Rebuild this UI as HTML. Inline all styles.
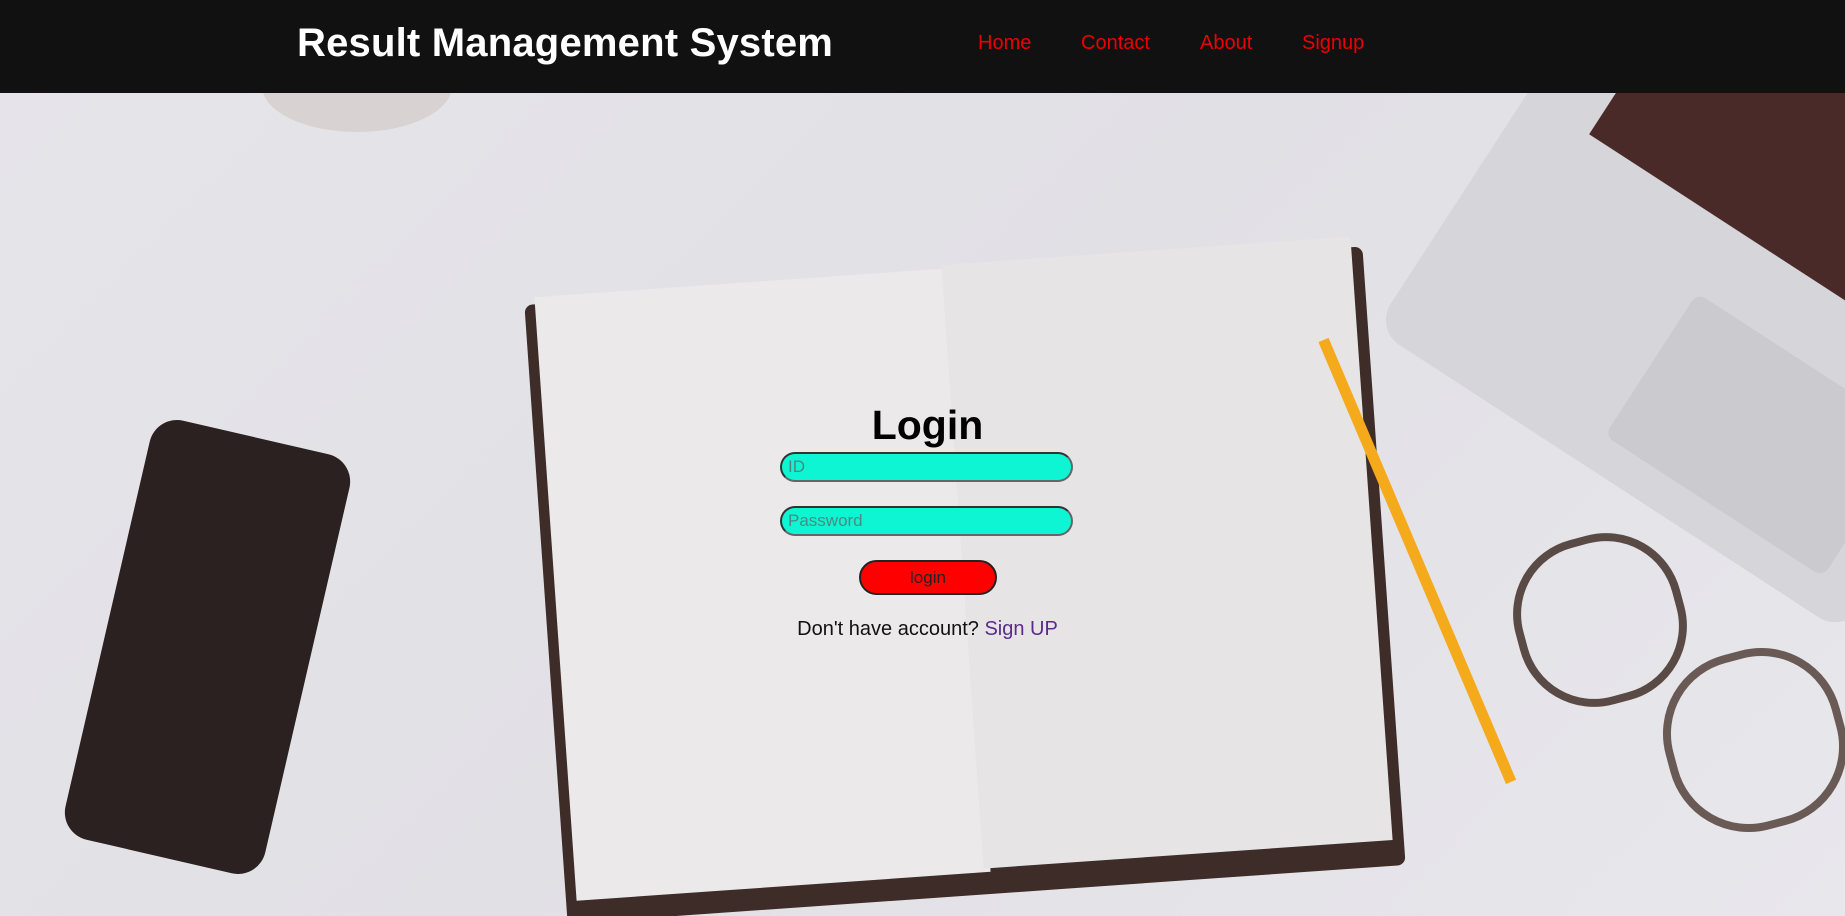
<!DOCTYPE html>
<html><head><meta charset="utf-8"><style>
*{margin:0;padding:0;box-sizing:border-box}
html,body{width:1845px;height:916px;overflow:hidden}
body{position:relative;font-family:"Liberation Sans",Arial,sans-serif;background:linear-gradient(135deg,#e6e5ea 0%,#e1e0e5 50%,#e8e7ec 100%)}
.abs{position:absolute}
header{position:absolute;left:0;top:0;width:1845px;height:93px;background:#111;z-index:5}
header h1{position:absolute;left:297px;top:21px;color:#fff;font-size:40px;font-weight:bold;letter-spacing:0.2px}
header a{position:absolute;top:32px;color:#e00;font-size:20px;text-decoration:none}
.form{position:absolute;left:0;top:0;width:1845px;z-index:4}
h2{position:absolute;left:0;width:1855px;text-align:center;top:402px;font-size:41px;font-weight:bold;color:#000}
.inp{position:absolute;left:780px;width:293px;height:30px;border-radius:15px;background:#0ef5d4;border:2px solid #333;border-right-color:#666;border-bottom-color:#666;color:#4a8a80;font-size:17px;padding-left:6px;line-height:26px}
.btn{position:absolute;left:859px;top:560px;width:138px;height:35px;border-radius:18px;background:#f00;border:2px solid #222;text-align:center;font-size:17px;line-height:31px;color:#222}
.txt{position:absolute;left:0;width:1855px;text-align:center;top:618px;font-size:20px;color:#111}
.txt span{color:#5a2b8a}
</style></head><body>
<header><h1>Result Management System</h1>
<a style="left:978px">Home</a><a style="left:1081px">Contact</a><a style="left:1200px">About</a><a style="left:1302px">Signup</a></header>

<div class="abs" style="left:262px;top:40px;width:190px;height:92px;border-radius:50%;background:#d8d2d2"></div>
<div class="abs" style="left:105px;top:432px;width:205px;height:430px;border-radius:28px;background:#2b2121;transform:rotate(13deg)"></div>
<div class="abs" style="left:545px;top:275px;width:840px;height:620px;background:#3d2c28;border-radius:8px;transform:rotate(-4deg)"></div>
<div class="abs" style="left:555px;top:282px;width:415px;height:605px;background:#ebe9ea;transform:rotate(-4deg)"></div>
<div class="abs" style="left:962px;top:250px;width:410px;height:605px;background:#e6e4e5;transform:rotate(-4deg)"></div>
<div class="abs" style="top:340px;width:11px;height:480px;background:#f4aa1a;transform:rotate(-23deg);transform-origin:50% 0;left:1318px"></div>
<div class="abs" style="left:1460px;top:40px;width:560px;height:480px;border-radius:30px;background:#d6d5d9;transform:rotate(33deg)"></div>
<div class="abs" style="left:1620px;top:30px;width:360px;height:220px;background:#4a2a28;transform:rotate(33deg)"></div>
<div class="abs" style="left:1630px;top:350px;width:260px;height:170px;border-radius:10px;background:#cbcacf;transform:rotate(33deg)"></div>
<div class="abs" style="left:1515px;top:535px;width:170px;height:170px;border-radius:45%;border:8px solid #5a4a45;transform:rotate(-15deg)"></div>
<div class="abs" style="left:1665px;top:650px;width:180px;height:180px;border-radius:45%;border:8px solid #6a5a55;transform:rotate(-15deg)"></div>

<div class="form">
<h2>Login</h2>
<div class="inp" style="top:452px">ID</div>
<div class="inp" style="top:506px">Password</div>
<div class="btn">login</div>
<div class="txt">Don't have account? <span>Sign UP</span></div>
</div>
</body></html>
